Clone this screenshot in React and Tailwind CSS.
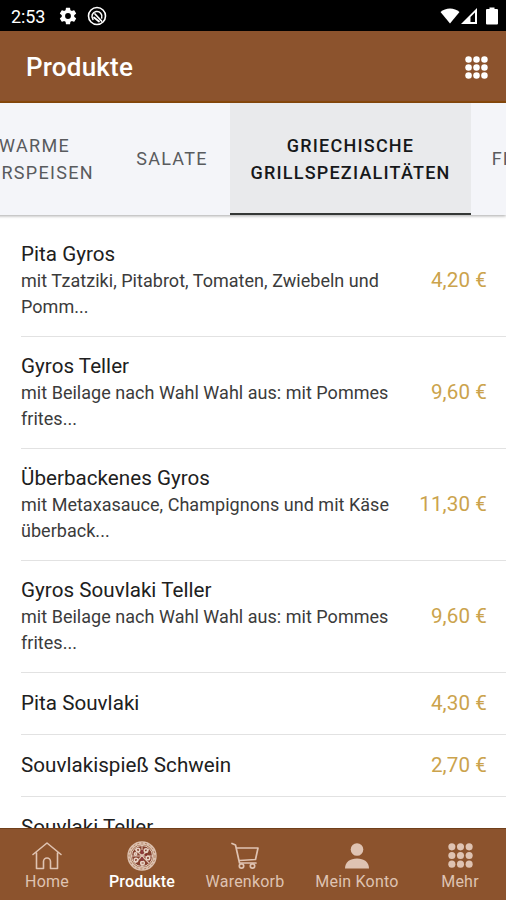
import React, { useState } from 'react';

const categories = [
  { id: 'vorspeisen', lines: ['WARME', 'VORSPEISEN'], width: 'w-[159px]' },
  { id: 'salate', lines: ['SALATE'], width: 'w-[116px]' },
  { id: 'grill', lines: ['GRIECHISCHE', 'GRILLSPEZIALITÄTEN'], width: 'w-[241px]' },
  { id: 'fisch', lines: ['FISCHGERICHTE'], width: 'w-[192px]' },
];

const products = [
  { name: 'Pita Gyros', text: ['mit Tzatziki, Pitabrot, Tomaten, Zwiebeln und', 'Pomm...'], price: '4,20 €' },
  { name: 'Gyros Teller', text: ['mit Beilage nach Wahl Wahl aus: mit Pommes', 'frites...'], price: '9,60 €' },
  { name: 'Überbackenes Gyros', text: ['mit Metaxasauce, Champignons und mit Käse', 'überback...'], price: '11,30 €' },
  { name: 'Gyros Souvlaki Teller', text: ['mit Beilage nach Wahl Wahl aus: mit Pommes', 'frites...'], price: '9,60 €' },
  { name: 'Pita Souvlaki', price: '4,30 €' },
  { name: 'Souvlakispieß Schwein', price: '2,70 €' },
  { name: 'Souvlaki Teller' },
];

const GridIcon = ({ className }) => (
  <svg viewBox="0 0 24 24" fill="currentColor" className={className}>
    {[3.7, 12, 20.3].map((y) =>
      [3.7, 12, 20.3].map((x) => <circle key={`${x}-${y}`} cx={x} cy={y} r="3.4" />)
    )}
  </svg>
);

const HomeIcon = () => (
  <svg viewBox="0 0 32 30" fill="none" stroke="currentColor" strokeWidth="1.6" strokeLinejoin="round" strokeLinecap="round" className="w-8 h-[30px]">
    <path d="M2 13.5 16 2l14 11.5M5.5 12v15.5h7v-7a3.5 3.5 0 0 1 7 0v7h7V12" />
  </svg>
);

const PizzaIcon = () => (
  <svg viewBox="0 0 30 30" fill="none" className="w-[30px] h-[30px]">
    <circle cx="15" cy="15" r="13" stroke="#dcc0ae" strokeWidth="3.4" />
    <circle cx="15" cy="15" r="13" stroke="#a4714f" strokeWidth="0.8" strokeDasharray="2 2" />
    <circle cx="15" cy="15" r="10.5" fill="#85412e" stroke="#e8d3c5" strokeWidth="1" />
    <path d="M15 5v20M5 15h20M8 8l14 14M22 8 8 22" stroke="#ddc0b0" strokeWidth="1.1" />
    <g stroke="#e8d3c5" strokeWidth="1.5">
      <circle cx="11" cy="9" r="1.8" />
      <circle cx="19" cy="9.5" r="1.8" />
      <circle cx="21" cy="17" r="1.8" />
      <circle cx="15.5" cy="22" r="1.8" />
      <circle cx="9" cy="19" r="1.8" />
      <circle cx="8.5" cy="13" r="1.2" />
    </g>
    <path d="M15 9v4M15 16v4M18 14h2" stroke="#80202b" strokeWidth="1.5" />
  </svg>
);

const CartIcon = () => (
  <svg viewBox="0 0 30 30" fill="none" stroke="currentColor" strokeWidth="1.7" strokeLinejoin="round" strokeLinecap="round" className="w-[30px] h-[30px]">
    <path d="M2 2.5 5.5 4l4 18H26M7 7h21l-2.500 11.500L9.500 19.500" />
    <circle cx="11.5" cy="25" r="2.2" />
    <circle cx="22.500" cy="25" r="2.2" />
  </svg>
);

const PersonIcon = () => (
  <svg viewBox="0 0 26 28" fill="currentColor" className="w-[26px] h-7">
    <circle cx="13" cy="7.5" r="6.3" />
    <path d="M1 26.5c0-6.500 5-10 12-10s12 3.500 12 10z" />
  </svg>
);

const navItems = [
  { id: 'home', label: 'Home', icon: <HomeIcon />, width: 'w-[94px]' },
  { id: 'produkte', label: 'Produkte', icon: <PizzaIcon />, width: 'w-[96px]' },
  { id: 'warenkorb', label: 'Warenkorb', icon: <CartIcon />, width: 'w-[110px]' },
  { id: 'konto', label: 'Mein Konto', icon: <PersonIcon />, width: 'w-[114px]' },
  { id: 'mehr', label: 'Mehr', icon: <GridIcon className="w-[25px] h-[25px]" />, width: 'w-[92px]' },
];

const StatusBar = () => (
  <div className="h-[31px] shrink-0 bg-black text-white flex items-center pl-[11px] pr-2">
    <span className="text-[18px] leading-none tracking-[-0.1px] mt-[2px]">2:53</span>
    <svg viewBox="0 0 24 24" fill="currentColor" className="w-5 h-5 ml-[13px]">
      <path d="M19.430 12.980c.04-.32.07-.64.07-.98s-.03-.66-.07-.98l2.110-1.650a.5.5 0 0 0 .12-.64l-2-3.460a.5.5 0 0 0-.61-.22l-2.490 1a7.300 7.300 0 0 0-1.690-.98l-.38-2.650A.49.49 0 0 0 14 2h-4a.49.49 0 0 0-.49.42l-.38 2.650c-.61.25-1.170.59-1.690.98l-2.490-1a.5.5 0 0 0-.61.22l-2 3.460a.5.5 0 0 0 .12.64l2.110 1.650c-.04.32-.07.65-.07.98s.03.66.07.98l-2.110 1.650a.5.5 0 0 0-.12.640l2 3.460c.12.220.39.300.610.220l2.490-1c.52.400 1.080.730 1.690.980l.38 2.650c.03.240.240.420.490.420h4c.25 0 .46-.18.49-.42l.38-2.650c.61-.25 1.170-.59 1.690-.98l2.490 1c.23.090.49 0 .61-.22l2-3.460a.5.5 0 0 0-.12-.64zM12 15.500a3.500 3.500 0 1 1 0-7 3.500 3.500 0 0 1 0 7z" />
    </svg>
    <svg viewBox="0 0 20 20" fill="none" stroke="currentColor" strokeLinecap="round" className="w-5 h-5 ml-[9px]">
      <circle cx="10" cy="10" r="8.5" strokeWidth="1.6" />
      <path d="M6 13.500a5 5 0 1 1 8.700-1.500" strokeWidth="1.5" />
      <path d="m8 8 6.500 7M7 11.500l5 4" strokeWidth="1.8" />
    </svg>
    <div className="ml-auto flex items-center">
      <svg viewBox="0 0 20 18" fill="currentColor" className="w-5 h-[18px]">
        <path d="M.5 5C5.500.3 14.500.3 19.500 5L10 16.500z" />
      </svg>
      <svg viewBox="0 0 18 18" className="w-[18px] h-[18px]">
        <path d="M1 17 17 1v16z" fill="currentColor" />
        <path d="M10.500 10 15 5.500V15h-4.500z" fill="#000" />
      </svg>
      <svg viewBox="0 0 12 18" fill="currentColor" className="w-3 h-[18px] ml-[8px]">
        <path d="M3.500.5h5V2H11a1 1 0 0 1 1 1v13.500a1 1 0 0 1-1 1H1a1 1 0 0 1-1-1V3a1 1 0 0 1 1-1h2.500z" />
      </svg>
    </div>
  </div>
);

const App = () => {
  const [category, setCategory] = useState('grill');
  const [page, setPage] = useState('produkte');

  return (
    <div className="w-[506px] h-[900px] bg-white overflow-hidden flex flex-col font-[Roboto,sans-serif]">
      <StatusBar />

      <header className="h-[72px] shrink-0 bg-[#8c532d] border-b-2 border-[#894a0c] flex items-center justify-between pl-[26px] pr-[18px] text-white">
        <h1 className="text-[26px] leading-none font-medium tracking-[0.2px] pt-[2px]">Produkte</h1>
        <button aria-label="Kategorien" className="pt-[2px]">
          <GridIcon className="w-[23px] h-[23px]" />
        </button>
      </header>

      {/* Category tabs */}
      <nav className="relative h-[112px] shrink-0 flex -ml-[45px] shadow-[0_1px_3px_rgba(0,0,0,0.35)] bg-[#f4f5f9]">
        {categories.map((c) => (
          <button
            key={c.id}
            onClick={() => setCategory(c.id)}
            className={`${c.width} shrink-0 flex flex-col items-center justify-center pt-px text-[18px] leading-[27px] border-b-2 ${
              category === c.id
                ? 'bg-[#e9eaec] border-[#343836] text-[#16181a] font-medium tracking-[1.22px]'
                : 'border-transparent text-[#595b5e] tracking-[1.3px]'
            }`}
          >
            {c.lines.map((line) => (
              <span key={line} className="whitespace-nowrap">{line}</span>
            ))}
          </button>
        ))}
      </nav>

      {/* Product list */}
      <main className="flex-1 min-h-0 overflow-hidden pt-[10px]">
        {products.map((p) => (
          <div
            key={p.name}
            className={`ml-[21px] pr-[19px] border-b border-[#e2e2e2] flex items-center justify-between ${
              p.text ? 'h-28' : 'h-[62px]'
            }`}
          >
            <div className="whitespace-nowrap pb-[2px]">
              <div className="text-[20.6px] leading-[28px] tracking-[0.03px] text-[#202020]">{p.name}</div>
              {p.text && (
                <div className="text-[18px] leading-[26px] tracking-[0.03px] text-[#3b3b3b]">
                  {p.text.map((line) => (
                    <p key={line}>{line}</p>
                  ))}
                </div>
              )}
            </div>
            <span className="text-[20.6px] tracking-[0.1px] text-[#cba34c]">{p.price}</span>
          </div>
        ))}
      </main>

      <footer className="h-[72px] shrink-0 bg-[#8c532d] border-t border-[#70401c] flex">
        {navItems.map((item) => (
          <button
            key={item.id}
            onClick={() => setPage(item.id)}
            className={`${item.width} flex flex-col items-center pt-[11px] text-[16px] leading-5 ${
              page === item.id ? 'text-white font-medium tracking-[0.15px]' : 'text-[#dfc3b2] tracking-[0.22px]'
            }`}
          >
            <span className="h-[31px] flex items-center justify-center">{item.icon}</span>
            <span className="whitespace-nowrap pt-px">{item.label}</span>
          </button>
        ))}
      </footer>
    </div>
  );
};

export default App;
